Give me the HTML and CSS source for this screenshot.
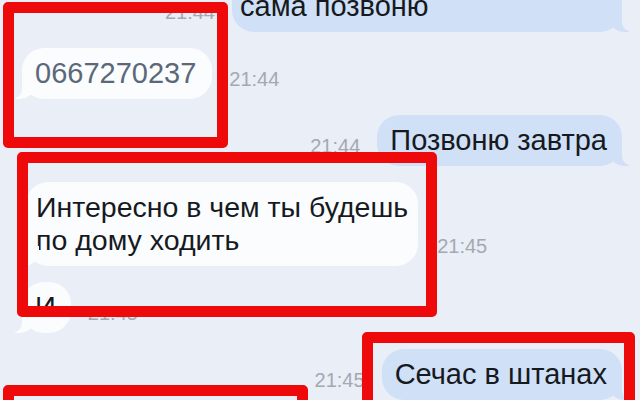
FILE: index.html
```html
<!DOCTYPE html>
<html lang="ru">
<head>
  <meta charset="UTF-8">
  <meta name="viewport" content="width=device-width, initial-scale=1.0">
  <title>Переписка</title>
  <link rel="stylesheet" href="styles.css">
</head>
<body>
  <div class="screen">
    <!-- лента сообщений -->
    <div class="chat">
      <div class="row row-out">
        <span class="time">21:44</span>
        <div class="msg msg-out msg-wide">сама позвоню</div>
      </div>
      <div class="row row-in">
        <div class="msg msg-in msg-phone">0667270237</div>
        <span class="time">21:44</span>
      </div>
      <div class="row row-out">
        <span class="time">21:44</span>
        <div class="msg msg-out">Позвоню завтра</div>
      </div>
      <div class="row row-in">
        <div class="msg msg-in msg-long">Интересно в чем ты будешь<br>по дому ходить</div>
        <span class="time time-far">21:45</span>
      </div>
      <div class="row row-in">
        <div class="msg msg-in">И</div>
        <span class="time">21:45</span>
      </div>
      <div class="row row-out">
        <span class="time">21:45</span>
        <div class="msg msg-out">Сечас в штанах</div>
      </div>
    </div>

    <!-- красные рамки поверх скриншота -->
    <div class="mark mark-1"></div>
    <div class="mark mark-2"></div>
    <div class="mark mark-3"></div>
    <div class="mark mark-4"></div>
  </div>
</body>
</html>
```

FILE: styles.css
```css
html, body {
  margin: 0;
  overflow: hidden;
}

body {
  background-color: #e9eef7;
  font-family: 'Liberation Sans', Arial, sans-serif;
  color: #161a1f;
}

.screen {
  position: relative;
  width: 640px;
  height: 400px;
  overflow: hidden;
}

/* лента */
.chat {
  display: flex;
  flex-direction: column;
  gap: 16px;
  margin-top: -19px;
}

.row {
  display: flex;
  align-items: flex-end;
  gap: 17px;
}

.row-out {
  justify-content: flex-end;
  padding-right: 18px;
}

.row-in {
  padding-left: 22px;
}

/* пузыри */
.msg {
  position: relative;
  font-size: 29px;
  line-height: 33px;
  padding: 9px 15px 9px 13px;
  border-radius: 22px;
}

.msg-in {
  background-color: #fbfcfe;
}

.msg-out {
  background-color: #d0e0f6;
}

.msg-wide {
  width: 362px;
  padding-left: 8px;
  padding-right: 20px;
}

.msg-phone {
  color: #5a6879;
  padding-right: 16px;
}

.msg-long {
  font-size: 28.5px;
  padding-left: 10px;
  padding-right: 10px;
  margin-left: 4px;
}

/* хвостики */
.msg-in::before,
.msg-out::before {
  content: "";
  position: absolute;
  bottom: 0;
  width: 20px;
  height: 20px;
}

.msg-in::before {
  left: -7px;
  background-color: #fbfcfe;
  border-bottom-right-radius: 16px 14px;
}

.msg-out::before {
  right: -7px;
  background-color: #d0e0f6;
  border-bottom-left-radius: 16px 14px;
}

.msg-in::after,
.msg-out::after {
  content: "";
  position: absolute;
  bottom: 0;
  width: 10px;
  height: 22px;
  background-color: #e9eef7;
}

.msg-in::after {
  left: -10px;
  border-bottom-right-radius: 10px;
}

.msg-out::after {
  right: -10px;
  border-bottom-left-radius: 10px;
}

.time {
  font-size: 20px;
  line-height: 22px;
  color: #a4a9b1;
  margin-bottom: 9px;
}

.time-far {
  margin-left: 2px;
}

/* рамки */
.mark {
  position: absolute;
  box-sizing: border-box;
  border: 11px solid #ee0a0a;
  border-radius: 5px;
}

.mark-1 {
  left: 3px;
  top: 2px;
  width: 225px;
  height: 146px;
}

.mark-2 {
  left: 17px;
  top: 152px;
  width: 420px;
  height: 165px;
}

.mark-3 {
  left: 362px;
  top: 332px;
  width: 273px;
  height: 90px;
}

.mark-4 {
  left: 3px;
  top: 385px;
  width: 305px;
  height: 40px;
}
```
